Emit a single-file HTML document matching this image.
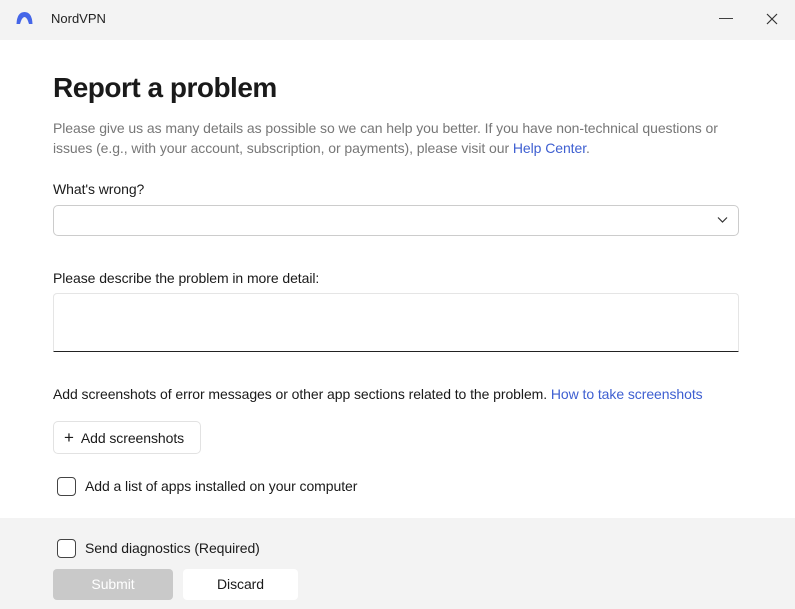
<!DOCTYPE html>
<html><head><style>
*{margin:0;padding:0;box-sizing:border-box}
body{width:795px;height:609px;position:relative;font-family:"Segoe UI","Liberation Sans",sans-serif;background:#fff;color:#1a1a1a;overflow:hidden}
.a{position:absolute;white-space:nowrap}
.tb{position:absolute;left:0;top:0;width:795px;height:40px;background:#f3f3f3}
.ft{position:absolute;left:0;top:518px;width:795px;height:91px;background:#f3f3f3}
.t{font-size:14px;letter-spacing:-0.07px}
.cb{position:absolute;width:19px;height:19px;border:1.5px solid #444;border-radius:4px;background:#fff}
a{color:#3e5fd1;text-decoration:none}
</style></head><body>
<div class="tb"></div>
<svg class="a" style="left:16px;top:11px" width="17" height="14" viewBox="0 0 17 14"><path d="M0.5 13 Q1 1 8.5 1 Q16 1 16.5 13 L13 13 Q11 6 8.5 6 Q6 6 4 13Z" fill="#4566e8"/></svg>
<div class="a" style="left:51px;top:11px;font-size:13px;color:#222">NordVPN</div>
<div class="a" style="left:719px;top:9px;font-size:14px;color:#333">—</div>
<svg class="a" style="left:766px;top:13px" width="12" height="12"><path d="M1 1L11 11M11 1L1 11" stroke="#333" stroke-width="1.2"/></svg>
<div class="a" style="left:53px;top:72px;font-size:28px;font-weight:600;color:#1a1a1a;letter-spacing:-0.5px">Report a problem</div>
<div class="a t" style="left:53px;top:118px;color:#777;line-height:20px">Please give us as many details as possible so we can help you better. If you have non-technical questions or<br>issues (e.g., with your account, subscription, or payments), please visit our <a>Help Center</a>.</div>
<div class="a t" style="left:53px;top:181px">What's wrong?</div>
<div class="a" style="left:53px;top:205px;width:686px;height:31px;border:1px solid #ccc;border-radius:5px"></div>
<svg class="a" style="left:717px;top:216px" width="11" height="8"><path d="M1 1.5L5.5 6L10 1.5" stroke="#333" fill="none" stroke-width="1.2"/></svg>
<div class="a t" style="left:53px;top:270px">Please describe the problem in more detail:</div>
<div class="a" style="left:53px;top:293px;width:686px;height:59px;border:1px solid #e5e5e5;border-bottom:1.5px solid #222;border-radius:4px 4px 0 0"></div>
<div class="a t" style="left:53px;top:386px">Add screenshots of error messages or other app sections related to the problem. <a>How to take screenshots</a></div>
<div class="a" style="left:53px;top:421px;width:148px;height:33px;border:1px solid #e2e2e2;border-radius:5px"></div>
<div class="a t" style="left:64px;top:428px"><span style="font-size:17px;margin-right:7px">+</span>Add screenshots</div>
<div class="cb" style="left:57px;top:477px"></div>
<div class="a t" style="left:85px;top:478px">Add a list of apps installed on your computer</div>
<div class="ft"></div>
<div class="cb" style="left:57px;top:539px"></div>
<div class="a t" style="left:85px;top:540px">Send diagnostics (Required)</div>
<div class="a t" style="left:53px;top:569px;width:120px;height:31px;background:#c9c9c9;border-radius:4px;color:#fff;text-align:center;line-height:31px">Submit</div>
<div class="a t" style="left:183px;top:569px;width:115px;height:31px;background:#fff;border-radius:4px;text-align:center;line-height:31px">Discard</div>
</body></html>
